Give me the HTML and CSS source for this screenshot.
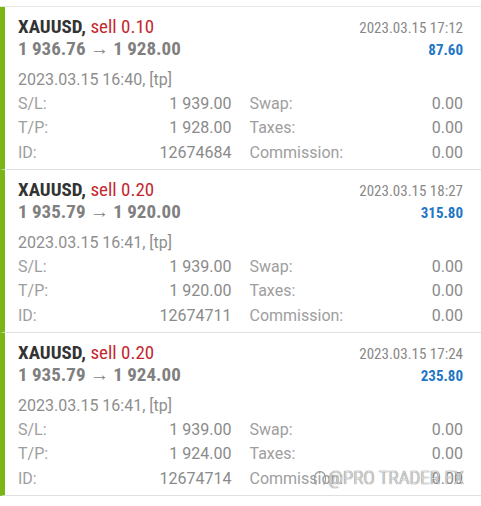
FILE: index.html
```html
<!DOCTYPE html>
<html>
<head>
<meta charset="utf-8">
<link rel="stylesheet" href="styles.css">
</head>
<body>
<div class="list">
  <div class="card">
    <div class="head">
      <div class="left">
        <div class="title"><b>XAUUSD,</b> <span class="sell">sell 0.10</span></div>
        <div class="price">1 936.76 → 1 928.00</div>
      </div>
      <div class="right">
        <div class="rdate">2023.03.15 17:12</div>
        <div class="profit">87.60</div>
      </div>
    </div>
    <div class="open">2023.03.15 16:40, [tp]</div>
    <div class="grid">
      <div class="cell"><span class="lbl">S/L:</span><span class="val">1 939.00</span></div>
      <div class="cell"><span class="lbl">Swap:</span><span class="val">0.00</span></div>
      <div class="cell"><span class="lbl">T/P:</span><span class="val">1 928.00</span></div>
      <div class="cell"><span class="lbl">Taxes:</span><span class="val">0.00</span></div>
      <div class="cell"><span class="lbl">ID:</span><span class="val">12674684</span></div>
      <div class="cell"><span class="lbl">Commission:</span><span class="val">0.00</span></div>
    </div>
  </div>
  <div class="card">
    <div class="head">
      <div class="left">
        <div class="title"><b>XAUUSD,</b> <span class="sell">sell 0.20</span></div>
        <div class="price">1 935.79 → 1 920.00</div>
      </div>
      <div class="right">
        <div class="rdate">2023.03.15 18:27</div>
        <div class="profit">315.80</div>
      </div>
    </div>
    <div class="open">2023.03.15 16:41, [tp]</div>
    <div class="grid">
      <div class="cell"><span class="lbl">S/L:</span><span class="val">1 939.00</span></div>
      <div class="cell"><span class="lbl">Swap:</span><span class="val">0.00</span></div>
      <div class="cell"><span class="lbl">T/P:</span><span class="val">1 920.00</span></div>
      <div class="cell"><span class="lbl">Taxes:</span><span class="val">0.00</span></div>
      <div class="cell"><span class="lbl">ID:</span><span class="val">12674711</span></div>
      <div class="cell"><span class="lbl">Commission:</span><span class="val">0.00</span></div>
    </div>
  </div>
  <div class="card">
    <div class="head">
      <div class="left">
        <div class="title"><b>XAUUSD,</b> <span class="sell">sell 0.20</span></div>
        <div class="price">1 935.79 → 1 924.00</div>
      </div>
      <div class="right">
        <div class="rdate">2023.03.15 17:24</div>
        <div class="profit">235.80</div>
      </div>
    </div>
    <div class="open">2023.03.15 16:41, [tp]</div>
    <div class="grid">
      <div class="cell"><span class="lbl">S/L:</span><span class="val">1 939.00</span></div>
      <div class="cell"><span class="lbl">Swap:</span><span class="val">0.00</span></div>
      <div class="cell"><span class="lbl">T/P:</span><span class="val">1 924.00</span></div>
      <div class="cell"><span class="lbl">Taxes:</span><span class="val">0.00</span></div>
      <div class="cell"><span class="lbl">ID:</span><span class="val">12674714</span></div>
      <div class="cell"><span class="lbl">Commission:</span><span class="val">0.00</span></div>
    </div>
    <div class="watermark">
      <svg class="wm-icon" width="14" height="16" viewBox="0 0 14 16"><path d="M3.5 14.5 C0.8 12.5 0.8 5 3.5 3 C5.5 1.5 8.5 1.5 10.5 3 C13.2 5 13.2 12.5 10.5 14.5" fill="none" stroke="#9a9a9a" stroke-width="1.1"/></svg>
      <span>@PRO TRADER FX</span>
    </div>
  </div>
</div>
</body>
</html>
```

FILE: styles.css
```css
html, body {
  margin: 0;
  padding: 0;
  background: #ffffff;
}
body {
  font-family: "Roboto Condensed", Roboto, "Liberation Sans", sans-serif;
}
.list {
  margin-top: 6px;
  border-top: 1px solid #e6e6e6;
}
.card {
  position: relative;
  border-left: 5px solid #7cb518;
  border-bottom: 1px solid #e0e0e0;
  padding: 8.5px 18px 4px 13px;
}
.head {
  display: flex;
  justify-content: space-between;
}
.title {
  font-size: 19px;
  line-height: 22px;
  color: #333333;
}
.title b {
  font-weight: 700;
}
.sell {
  color: #c3282e;
}
.price {
  font-size: 19px;
  line-height: 22px;
  font-weight: 700;
  color: #808080;
}
.right {
  text-align: right;
  padding-top: 2px;
}
.rdate {
  font-size: 15px;
  line-height: 21px;
  color: #888888;
}
.profit {
  font-size: 15px;
  line-height: 22px;
  font-weight: 700;
  color: #1f76c5;
}
.open {
  margin-top: 6px;
  font-family: Roboto, sans-serif;
  font-size: 16px;
  line-height: 25px;
  color: #8e8e8e;
}
.grid {
  display: grid;
  grid-template-columns: 1fr 1fr;
  column-gap: 18px;
  font-family: Roboto, sans-serif;
  font-size: 16px;
  line-height: 24.5px;
}
.cell {
  display: flex;
  justify-content: space-between;
}
.lbl {
  color: #9e9e9e;
}
.val {
  color: #8a8a8a;
}
.watermark {
  position: absolute;
  right: 17px;
  bottom: 6px;
  display: flex;
  align-items: center;
  gap: 1px;
  font-family: "Roboto Condensed", Roboto, sans-serif;
  font-weight: 300;
  font-size: 19px;
  color: rgba(255, 255, 255, 0.75);
  text-shadow: 0 0 1px #6f6f6f, 0 0 1px #6f6f6f;
}
```
